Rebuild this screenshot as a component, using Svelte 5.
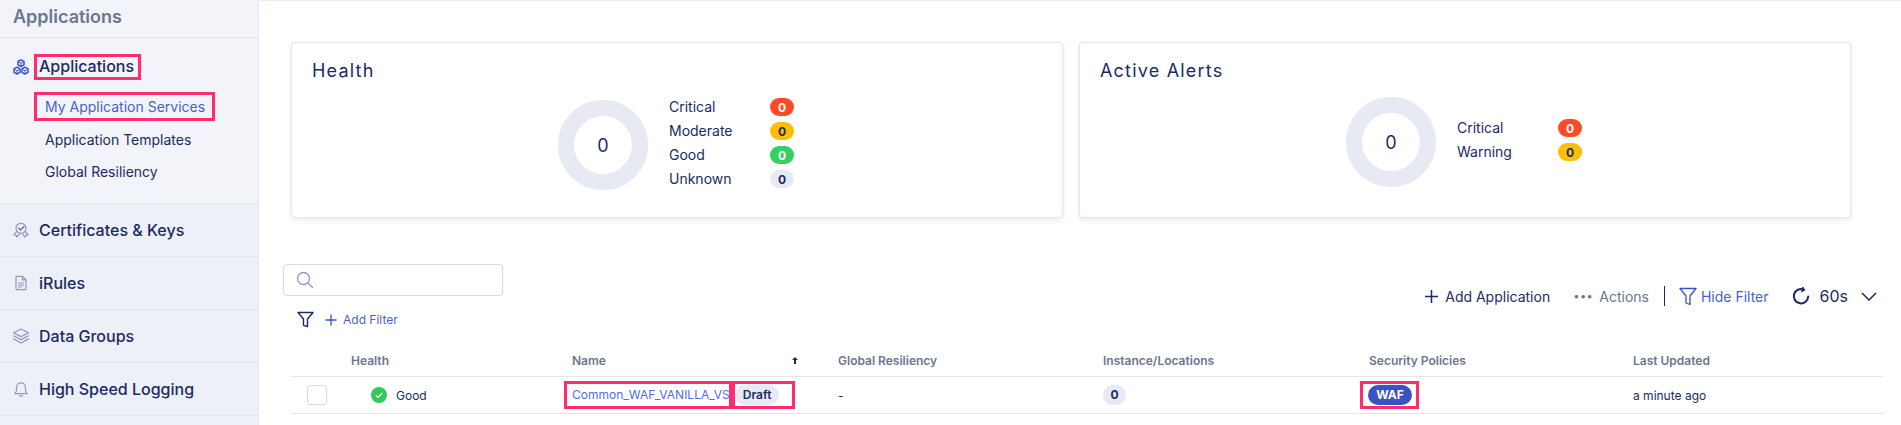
<script>
  const sideItems = [
    { label: "Certificates & Keys", icon: "cert" },
    { label: "iRules", icon: "doc" },
    { label: "Data Groups", icon: "layers" },
    { label: "High Speed Logging", icon: "bell" },
  ];
  const healthRows = [
    { label: "Critical", tone: "red" },
    { label: "Moderate", tone: "amber" },
    { label: "Good", tone: "green" },
    { label: "Unknown", tone: "grey" },
  ];
  const alertRows = [
    { label: "Critical", tone: "red" },
    { label: "Warning", tone: "amber" },
  ];
</script>

<div class="page">
  <aside class="sidebar">
    <div class="side-title">Applications</div>
    <section class="side-group">
      <div class="group-head">
        <svg class="side-icon" viewBox="0 0 16 16" fill="none" stroke="#3b51c6" stroke-width="1.500" stroke-linejoin="round">
          <path d="M8 .8l3 1.700v3.300L8 7.500 5 5.800V2.500z" />
          <path d="M4 8.200l3 1.700v3.400l-3 1.700-3-1.700V9.900z" />
          <path d="M12 8.200l3 1.700v3.400l-3 1.700-3-1.700V9.900z" />
          <path d="M5.400 2.800L8 4.200l2.600-1.400M8 4.200v3M1.300 10.200L4 11.700l2.700-1.500M4 11.700v3M9.300 10.200l2.700 1.500 2.700-1.500M12 11.700v3" stroke-width="0.900" />
        </svg>
        <span class="mark group-name">Applications</span>
      </div>
      <ul class="sub">
        <li class="mark active">My Application Services</li>
        <li>Application Templates</li>
        <li>Global Resiliency</li>
      </ul>
    </section>
    {#each sideItems as item}
      <div class="side-row">
        <svg class="side-icon" viewBox="0 0 16 16" fill="none" stroke="#8f99bd" stroke-width="1.200" stroke-linejoin="round" stroke-linecap="round">
          {#if item.icon === "cert"}
            <circle cx="8" cy="6.300" r="5" />
            <path d="M5.800 6.300l1.700 1.700 3.300-3.300" stroke="#5d6a99" stroke-width="1.300" />
            <path d="M3.800 9.400L.8 12.800l2.300.3.900 2 2.700-3.200M12.200 9.400l3 3.400-2.300.3-.9 2-2.700-3.200" />
          {:else if item.icon === "doc"}
            <path d="M3 2.500a1.200 1.200 0 0 1 1.200-1.200h5.300L13 4.800v8.700a1.200 1.200 0 0 1-1.200 1.200H4.200A1.200 1.200 0 0 1 3 13.500z" />
            <path d="M9.500 1.300v3.500H13M5.500 8h5M5.500 10h5M5.500 12h3" />
          {:else if item.icon === "layers"}
            <path d="M8 1L15.500 4.800 8 8.600.5 4.800z" />
            <path d="M.5 7.800L8 11.600l7.500-3.800M.5 10.900L8 15l7.500-4.100" />
          {:else}
            <path d="M1.800 12.600c1.200-.9 1.700-1.900 1.700-3.600V6.300a4.500 4.500 0 0 1 9 0V9c0 1.700.5 2.700 1.700 3.600z" />
            <path d="M6.300 14.800h3.400" />
          {/if}
        </svg>
        <span>{item.label}</span>
      </div>
    {/each}
  </aside>

  <main class="main">
    <div class="cards">
      <section class="card">
        <h2>Health</h2>
        <div class="chart-wrap">
          <div class="donut"><span>0</span></div>
          <ul class="legend">
            {#each healthRows as row}
              <li><span class="legend-label">{row.label}</span><span class="badge {row.tone}">0</span></li>
            {/each}
          </ul>
        </div>
      </section>
      <section class="card">
        <h2>Active Alerts</h2>
        <div class="chart-wrap alerts">
          <div class="donut"><span>0</span></div>
          <ul class="legend">
            {#each alertRows as row}
              <li><span class="legend-label">{row.label}</span><span class="badge {row.tone}">0</span></li>
            {/each}
          </ul>
        </div>
      </section>
    </div>

    <div class="controls">
      <div class="filters">
        <div class="search">
          <svg width="18" height="18" viewBox="0 0 18 18" fill="none" stroke="#8f99bd" stroke-width="1.300" stroke-linecap="round">
            <circle cx="7.500" cy="7.500" r="6" />
            <path d="M12 12l4.500 4.500" />
          </svg>
        </div>
        <div class="filter-row">
          <svg width="17" height="17" viewBox="0 0 17 17" fill="none" stroke="#1a2b63" stroke-width="1.400" stroke-linejoin="round">
            <path d="M1 1.500h15L10.500 8v7.500l-4-1.200V8z" />
          </svg>
          <svg class="add-plus" width="12" height="12" viewBox="0 0 12 12" stroke="#3b51c6" stroke-width="1.300">
            <path d="M6 .5v11M.5 6h11" />
          </svg>
          <span class="link">Add Filter</span>
        </div>
      </div>
      <div class="tools">
        <svg width="13" height="13" viewBox="0 0 13 13" stroke="#1a2b63" stroke-width="1.500"><path d="M6.500 0v13M0 6.500h13" /></svg>
        <span class="tool-add">Add Application</span>
        <span class="dots">•••</span>
        <span class="tool-actions">Actions</span>
        <span class="divider"></span>
        <svg width="18" height="19" viewBox="0 0 18 19" fill="none" stroke="#3b51c6" stroke-width="1.300" stroke-linejoin="round">
          <path d="M1 1.500h16L11 9v8.500l-4-1.500V9z" />
        </svg>
        <span class="tool-hide">Hide Filter</span>
        <svg class="refresh" width="18" height="18" viewBox="0 0 18 18" fill="none" stroke="#1a2b63" stroke-width="2" stroke-linecap="round">
          <path d="M11.800 2.600A7.200 7.200 0 1 0 16.200 9.500" />
          <path d="M10.800.7l1.300 2.200-2.300 1.400" stroke-width="1.600" />
        </svg>
        <span class="tool-time">60s</span>
        <svg width="16" height="9" viewBox="0 0 16 9" fill="none" stroke="#1a2b63" stroke-width="1.500"><path d="M1 1l7 7 7-7" /></svg>
      </div>
    </div>

    <div class="table">
      <div class="tr th">
        <span></span>
        <span>Health</span>
        <span class="name-head">Name <svg width="6" height="7" viewBox="0 0 6 7" fill="#1a2b63"><path d="M3 0l3 3H4v4H2V3H0z" /></svg></span>
        <span>Global Resiliency</span>
        <span>Instance/Locations</span>
        <span>Security Policies</span>
        <span>Last Updated</span>
      </div>
      <div class="tr td">
        <span class="check"></span>
        <span class="status">
          <svg width="16" height="16" viewBox="0 0 16 16"><circle cx="8" cy="8" r="8" fill="#34c759" /><path d="M4.800 8.200l2.200 2.200 4.200-4.400" fill="none" stroke="#fff" stroke-width="1.200" /></svg>
          Good
        </span>
        <span class="name-cell">
          <a class="mark app-link" href="#top">Common_WAF_VANILLA_VS</a>
          <span class="mark draft-box"><span class="draft">Draft</span></span>
        </span>
        <span>-</span>
        <span><span class="count">0</span></span>
        <span><span class="mark waf-box"><span class="waf">WAF</span></span></span>
        <span>a minute ago</span>
      </div>
    </div>
  </main>
</div>

<style>
  :global(body) {
    margin: 0;
    background: #fff;
  }
  .page {
    display: flex;
    width: 1901px;
    height: 425px;
    overflow: hidden;
    font-family: Inter, "Noto Sans", sans-serif;
    color: #1a2b63;
  }
  ul {
    list-style: none;
    margin: 0;
    padding: 0;
  }
  .mark {
    outline: 3px solid #ff2d6e;
    outline-offset: -3px;
  }

  .sidebar {
    width: 258px;
    flex: none;
    background: #eef0f8;
    border-right: 1px solid #e6e8f0;
  }
  .side-title {
    height: 38px;
    box-sizing: border-box;
    padding: 6px 0 0 13px;
    background: #f2f4f9;
    border-bottom: 1px solid #e3e6ef;
    font-size: 18px;
    line-height: 22px;
    font-weight: 600;
    color: #6b7690;
  }
  .side-group {
    height: 166px;
    box-sizing: border-box;
    padding-top: 16px;
    background: #f2f4f9;
    border-bottom: 1px solid #e3e6ef;
  }
  .group-head {
    display: flex;
    align-items: center;
    padding-left: 13px;
    gap: 5px;
  }
  .group-name {
    padding: 0 7px 0 5px;
    height: 26px;
    line-height: 25px;
    font-size: 16px;
    font-weight: 500;
  }
  .side-icon {
    width: 16px;
    height: 16px;
    flex: none;
  }
  .sub {
    margin-top: 12px;
    font-size: 14px;
  }
  .sub li {
    height: 32px;
    line-height: 32px;
    padding-left: 45px;
  }
  .sub li.active {
    width: 181px;
    height: 29px;
    line-height: 29px;
    margin-left: 34px;
    padding-left: 11px;
    margin-bottom: 3px;
    box-sizing: border-box;
    color: #4a5fd0;
  }
  .side-row {
    display: flex;
    align-items: center;
    gap: 10px;
    height: 53px;
    box-sizing: border-box;
    padding-left: 13px;
    border-bottom: 1px solid #e3e6ef;
    font-size: 16px;
    font-weight: 500;
  }

  .main {
    flex: 1;
    min-width: 0;
    padding: 2px 18px 0 32px;
    box-sizing: border-box;
    border-top: 1px solid #eceef4;
  }
  .cards {
    display: flex;
    gap: 16px;
    margin-top: 39px;
  }
  .card {
    width: 772px;
    height: 176px;
    box-sizing: border-box;
    background: #fff;
    border: 1px solid #e4e6ee;
    border-radius: 4px;
    box-shadow: 0 2px 5px rgba(40, 50, 100, 0.1);
    padding: 17px 20px;
  }
  h2 {
    margin: 0;
    font-size: 18px;
    line-height: 22px;
    font-weight: 400;
    letter-spacing: 1.2px;
  }
  .chart-wrap {
    display: flex;
    align-items: center;
    margin-top: 13px;
    margin-left: 246px;
  }
  .chart-wrap.alerts {
    margin-top: 15px;
  }
  .donut {
    width: 90px;
    height: 90px;
    flex: none;
    box-sizing: border-box;
    border: 16px solid #e7e9f3;
    border-radius: 50%;
    display: flex;
    align-items: center;
    justify-content: center;
    font-size: 18px;
  }
  .legend {
    margin: 0 0 4px 21px;
    font-size: 14px;
  }
  .legend li {
    display: flex;
    align-items: center;
    height: 24px;
  }
  .legend-label {
    width: 101px;
    padding-bottom: 2px;
  }
  .badge {
    width: 24px;
    height: 18px;
    border-radius: 9px;
    display: flex;
    align-items: center;
    justify-content: center;
    font-size: 12px;
    font-weight: 700;
  }
  .red {
    background: #ff4a27;
    color: #fff;
  }
  .amber {
    background: #ffbd03;
  }
  .green {
    background: #35cf62;
    color: #fff;
  }
  .grey {
    background: #e7e9f3;
  }

  .controls {
    display: flex;
    justify-content: space-between;
    margin: 46px 6px 0 -8px;
  }
  .search {
    width: 220px;
    height: 32px;
    box-sizing: border-box;
    border: 1px solid #d8dbe6;
    border-radius: 4px;
    padding: 6px 0 0 12px;
  }
  .filter-row {
    display: flex;
    align-items: center;
    margin: 15px 0 0 14px;
    height: 17px;
  }
  .add-plus {
    margin-left: 11px;
  }
  .link {
    margin-left: 6px;
    font-size: 12px;
    color: #4a5fd0;
  }
  .tools {
    display: flex;
    align-items: center;
    height: 22px;
    margin-top: 21px;
    font-size: 14px;
  }
  .tool-add {
    margin-left: 7px;
  }
  .dots {
    margin-left: 23px;
    font-size: 11px;
    letter-spacing: 0.5px;
    color: #6b7690;
  }
  .tool-actions {
    margin-left: 6px;
    color: #6b7690;
  }
  .divider {
    width: 1px;
    height: 20px;
    margin: 0 14px 0 15px;
    background: #1a2b63;
  }
  .tool-hide {
    margin-left: 4px;
    color: #4a5fd0;
  }
  .refresh {
    margin-left: 23px;
  }
  .tool-time {
    margin: 0 13px 0 10px;
    font-size: 16px;
  }

  .table {
    margin-top: 19px;
    font-size: 12px;
  }
  .tr {
    display: grid;
    grid-template-columns: 60px 221px 266px 265px 266px 264px 1fr;
    align-items: center;
  }
  .th {
    height: 30px;
    padding-bottom: 3px;
    box-sizing: border-box;
    border-bottom: 1px solid #e3e6ef;
    color: #6b7690;
    font-weight: 600;
  }
  .td {
    height: 36px;
    border-bottom: 1px solid #e3e6ef;
  }
  .name-head {
    display: flex;
    align-items: center;
    justify-content: space-between;
    padding-right: 40px;
  }
  .check {
    width: 20px;
    height: 20px;
    margin-left: 16px;
    box-sizing: border-box;
    border: 1px solid #d8dbe6;
    border-radius: 3px;
  }
  .status {
    display: flex;
    align-items: center;
    gap: 9px;
    padding-left: 20px;
  }
  .name-cell {
    display: flex;
    align-items: center;
    margin-left: -8px;
  }
  .app-link {
    height: 28px;
    line-height: 28px;
    padding: 0 2px 0 8px;
    color: #4f6cf0;
    text-decoration: none;
    white-space: nowrap;
  }
  .draft-box {
    display: flex;
    align-items: center;
    width: 63px;
    height: 28px;
    padding-left: 3px;
    box-sizing: border-box;
  }
  .draft {
    padding: 0 8px;
    height: 20px;
    line-height: 20px;
    border-radius: 10px;
    background: #e7e9f3;
    font-weight: 600;
  }
  .count {
    display: inline-block;
    width: 23px;
    height: 20px;
    line-height: 20px;
    text-align: center;
    border-radius: 10px;
    background: #e7e9f3;
    font-weight: 700;
  }
  .waf-box {
    display: inline-flex;
    align-items: center;
    width: 59px;
    height: 28px;
    margin-left: -9px;
    padding-left: 8px;
    box-sizing: border-box;
    vertical-align: middle;
  }
  .waf {
    width: 44px;
    height: 20px;
    line-height: 20px;
    text-align: center;
    border-radius: 10px;
    background: #3b51c6;
    color: #fff;
    font-weight: 700;
  }
</style>
